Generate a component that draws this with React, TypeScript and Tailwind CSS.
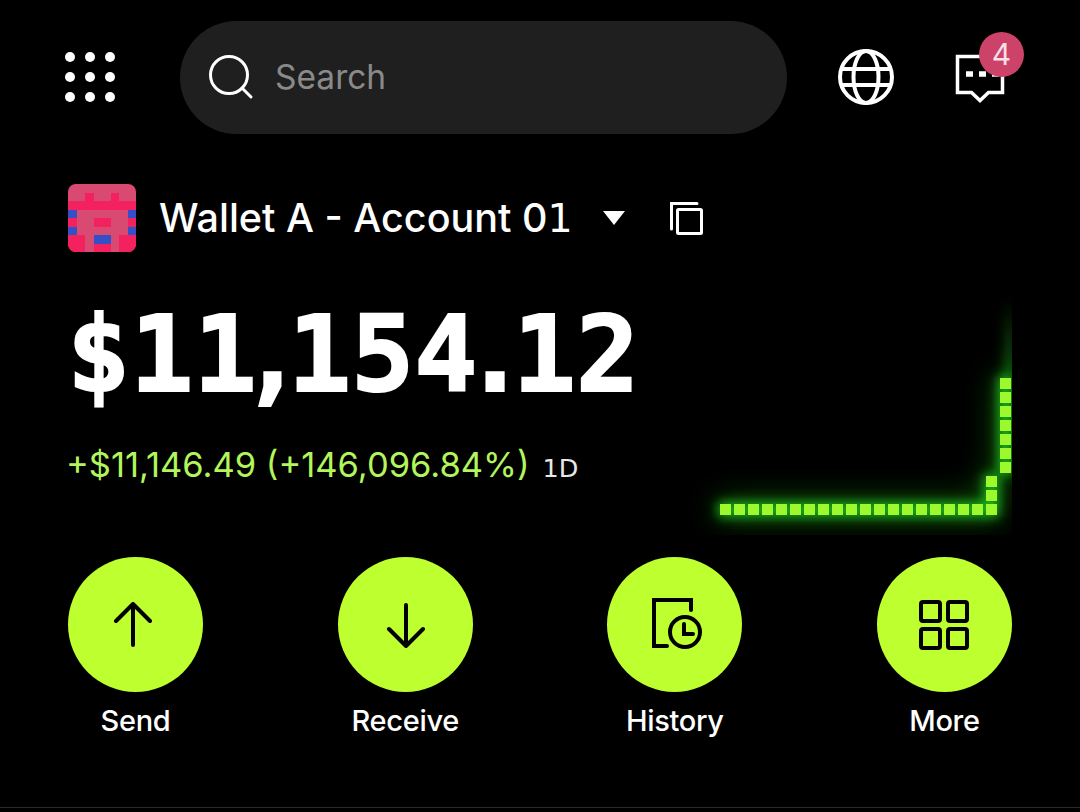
const font = "font-['Inter','Liberation_Sans',sans-serif]";
const slab = "font-['DejaVu_Sans',sans-serif]";

const GridDots = () => (
  <svg width="52" height="52" viewBox="0 0 52 52" fill="white" className="-mt-[2px]">
    {[6, 26, 46].map((y) =>
      [6, 26, 46].map((x) => <circle key={`${x}-${y}`} cx={x} cy={y} r="5" />)
    )}
  </svg>
);

const SearchIcon = () => (
  <svg width="46" height="46" viewBox="0 0 46 46" fill="none" stroke="white" strokeLinecap="round" className="-mt-[2px] -ml-[1px]">
    <circle cx="21" cy="21" r="18.5" strokeWidth="3" />
    <path d="M34 34l9 9" strokeWidth="3" />
  </svg>
);

const GlobeIcon = () => (
  <svg width="56" height="56" viewBox="0 0 56 56" fill="none" stroke="white" strokeWidth="4" className="-mt-[2px]">
    <circle cx="28" cy="28" r="26" />
    <ellipse cx="28" cy="28" rx="12.5" ry="26" />
    <path d="M3 20h50M3 36h50" />
  </svg>
);

const MessageIcon = () => (
  <svg width="50" height="50" viewBox="0 0 50 50" fill="none" stroke="white" strokeWidth="3.5">
    <path d="M2.500 2.500h45v36H33.500L25 46.500l-8.500-8H2.500z" />
    <path d="M11 20h7M24 20h7M37 20h7" strokeWidth="5.500" />
  </svg>
);

const CopyIcon = () => (
  <svg width="34" height="34" viewBox="0 0 34 34" fill="none" stroke="white" strokeWidth="3">
    <rect x="7.500" y="7.500" width="24" height="24" rx="1" />
    <path d="M1.500 27V1.500H27" strokeLinecap="round" />
  </svg>
);

const ArrowUpIcon = () => (
  <svg width="40" height="46" viewBox="0 0 40 46" fill="none" stroke="black" strokeWidth="4" strokeLinecap="round" strokeLinejoin="round" className="-ml-[5px]">
    <path d="M20 2v41M3 19L20 2l17 17" />
  </svg>
);

const ArrowDownIcon = () => (
  <svg width="40" height="46" viewBox="0 0 40 46" fill="none" stroke="black" strokeWidth="4" strokeLinecap="round" strokeLinejoin="round" className="ml-[1px]">
    <path d="M20 3v41M3 27l17 17 17-17" />
  </svg>
);

const HistoryIcon = () => (
  <svg width="54" height="54" viewBox="0 0 54 54" fill="none" stroke="black" strokeWidth="4" strokeLinecap="round" className="mb-[3px] ml-[5px]">
    <path d="M17 50H4V4h37v10" />
    <circle cx="35" cy="36" r="15" />
    <path d="M34 28v10h9" />
  </svg>
);

const MoreIcon = () => (
  <svg width="50" height="50" viewBox="0 0 50 50" fill="none" stroke="black" strokeWidth="4">
    <rect x="2" y="2" width="19" height="19" rx="2" />
    <rect x="29" y="2" width="19" height="19" rx="2" />
    <rect x="2" y="29" width="19" height="19" rx="2" />
    <rect x="29" y="29" width="19" height="19" rx="2" />
  </svg>
);

// [col, row, width] of each cell on the 8 x 8 identicon grid
const hotCells = [
  [2, 1, 1], [5, 1, 1], [0, 2, 8], [0, 4, 1], [3, 4, 2], [7, 4, 1],
  [0, 6, 2], [6, 6, 2], [0, 7, 2], [3, 7, 2], [6, 7, 2],
];
const blueCells = [[0, 3, 1], [7, 3, 1], [0, 5, 1], [7, 5, 1], [3, 6, 2]];

const Identicon = () => (
  <svg width="68" height="68" viewBox="0 0 8 8" shapeRendering="crispEdges" className="shrink-0 rounded-[8px]">
    <rect width="8" height="8" fill="#d84a72" />
    {hotCells.map(([x, y, w]) => (
      <rect key={`h${x}-${y}`} x={x} y={y} width={w} height="1" fill="#f3225f" />
    ))}
    {blueCells.map(([x, y, w]) => (
      <rect key={`b${x}-${y}`} x={x} y={y} width={w} height="1" fill="#3350c8" />
    ))}
  </svg>
);

const bottomRow = Array.from({ length: 20 }, (_, i) => [i * 14, 226]);
const riser = [[266, 212], [266, 198]];
const lastCol = Array.from({ length: 7 }, (_, i) => [280, 100 + i * 14]);
const squares = [...bottomRow, ...riser, ...lastCol];

const Chart = () => (
  <svg width="332" height="287" viewBox="-40 -30 332 287" className="shrink-0">
    <defs>
      <filter id="glow" filterUnits="userSpaceOnUse" x="-60" y="-50" width="400" height="340">
        <feGaussianBlur stdDeviation="6" />
      </filter>
      <filter id="wide" filterUnits="userSpaceOnUse" x="-60" y="-50" width="400" height="340">
        <feGaussianBlur stdDeviation="16" />
      </filter>
      <linearGradient id="fade" x1="0" y1="0" x2="0" y2="1">
        <stop offset="0" stopColor="#22b81a" stopOpacity="0" />
        <stop offset="1" stopColor="#22b81a" stopOpacity="0.55" />
      </linearGradient>
    </defs>
    <rect x="284" y="20" width="12" height="82" fill="url(#fade)" filter="url(#glow)" />
    <g filter="url(#wide)" fill="#1c9a14" opacity="0.7">
      {squares.map(([x, y]) => (
        <rect key={`w${x}-${y}`} x={x - 2} y={y - 2} width="15" height="15" />
      ))}
    </g>
    <g filter="url(#glow)" fill="#1fb512">
      {squares.map(([x, y]) => (
        <rect key={`g${x}-${y}`} x={x - 2} y={y - 2} width="15" height="15" />
      ))}
    </g>
    <g fill="#9df82e">
      {squares.map(([x, y]) => (
        <rect key={`${x}-${y}`} x={x} y={y} width="11" height="11" />
      ))}
    </g>
  </svg>
);

function ActionButton({ label, children }: { label: string; children: React.ReactNode }) {
  return (
    <div className="flex w-[135px] flex-col items-center">
      <div className="flex h-[135px] w-[135px] items-center justify-center rounded-full bg-[#bdff2f]">
        {children}
      </div>
      <span className="mt-[12px] whitespace-nowrap text-[29px] leading-[34px] font-medium tracking-[-0.3px] text-white">
        {label}
      </span>
    </div>
  );
}

export default function App() {
  return (
    <div className={`flex h-[812px] w-[1080px] flex-col overflow-hidden bg-black ${font}`}>
      <header className="mt-[21px] flex h-[113px] shrink-0 items-center pr-[56px] pl-[64px]">
        <GridDots />
        <div className="ml-[64px] flex h-[113px] w-[607px] items-center rounded-full bg-[#1f1f1f] pl-[29px]">
          <SearchIcon />
          <span className="-mt-[1px] ml-[21px] text-[33.500px] text-[#8a8a8a]">Search</span>
        </div>
        <div className="ml-[51px]">
          <GlobeIcon />
        </div>
        <div className="relative mt-[2px] ml-[61px]">
          <MessageIcon />
          <span className="absolute -top-[22px] left-[24px] flex h-[45px] w-[45px] items-center justify-center rounded-full bg-[#cc4268] text-[30px] text-[#f6dfe6]">
            4
          </span>
        </div>
      </header>

      <section className="mt-[50px] flex items-center pl-[68px]">
        <Identicon />
        <span className="ml-[23px] w-[412px] text-[39.500px] leading-[50px] font-medium whitespace-nowrap text-white">
          Wallet A - Account 0<span className={slab}>1</span>
        </span>
        <svg width="22" height="14" viewBox="0 0 22 14" fill="white" className="ml-[32px]">
          <path d="M0 0h22L11 14z" />
        </svg>
        <div className="mt-[2px] ml-[45px]">
          <CopyIcon />
        </div>
      </section>

      <section className="relative flex h-[300px] pl-[68px]">
        <div>
          <div className="mt-[38px] -ml-[1px] font-['DejaVu_Sans_Mono',monospace] text-[105px] leading-[130px] font-bold whitespace-nowrap text-white [-webkit-text-stroke:2px_white]">
            $1<span className="tracking-[-16px]">1,</span>15<span className="tracking-[-14px]">4.</span>12
          </div>
          <div className="mt-[23px] -ml-[2px] flex items-baseline text-[34.500px] leading-[44px] whitespace-nowrap text-[#b2f55c]">
            <span>+$11,146.49 (+146,096.84%)</span>
            <span className={`ml-[13px] text-[25.500px] text-[#e8e8e8] ${slab}`}>1D</span>
          </div>
        </div>
        <div className="absolute -top-[4px] right-[68px]">
          <Chart />
        </div>
      </section>

      <section className="mt-[5px] flex justify-between px-[68px]">
        <ActionButton label="Send">
          <ArrowUpIcon />
        </ActionButton>
        <ActionButton label="Receive">
          <ArrowDownIcon />
        </ActionButton>
        <ActionButton label="History">
          <HistoryIcon />
        </ActionButton>
        <ActionButton label="More">
          <MoreIcon />
        </ActionButton>
      </section>

      <div className="mt-auto mb-[4px] h-px bg-[#2a2a2a]" />
    </div>
  );
}
